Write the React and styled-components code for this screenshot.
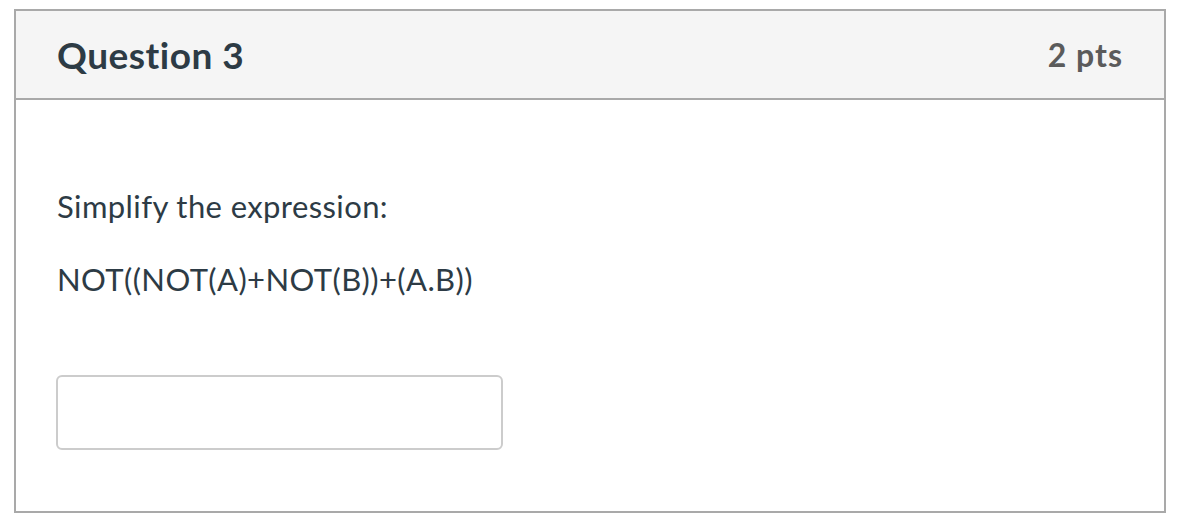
import styled, { createGlobalStyle } from "styled-components";

const GlobalStyle = createGlobalStyle`
    body {
        margin: 0;
        background: #fff;
        font-family: Lato, "Noto Sans", sans-serif;
        color: #2d3b45;
    }
`;

const App = () => {
    return (
        <>
            <GlobalStyle />
            <Pregunta>
                <Cabecera>
                    <Titulo>Question 3</Titulo>
                    <Puntos>2 pts</Puntos>
                </Cabecera>
                <Cuerpo>
                    <Texto>Simplify the expression:</Texto>
                    <Texto>NOT((NOT(A)+NOT(B))+(A.B))</Texto>
                    <Respuesta type="text" aria-label="Answer" />
                </Cuerpo>
            </Pregunta>
        </>
    );
}

const Pregunta = styled.div`
    box-sizing: border-box;
    width: 1152px;
    margin: 9px 0 0 14px;
    border: 2px solid #a9a9a9;
    background: #fff;
`;

const Cabecera = styled.div`
    display: flex;
    justify-content: space-between;
    align-items: center;
    height: 87px;
    padding: 0 41px;
    background-color: #f5f5f5;
    border-bottom: 2px solid #a9a9a9;
`;

const Titulo = styled.h2`
    margin: 0;
    font-size: 37px;
    letter-spacing: 0.5px;
    font-weight: 700;
    color: #2d3b45;
`;

const Puntos = styled.div`
    font-size: 32px;
    letter-spacing: 1px;
    font-weight: 700;
    color: #5b5b5b;
    margin-top: 0;
`;

const Cuerpo = styled.div`
    display: flex;
    flex-direction: column;
    align-items: flex-start;
    height: 411px;
    box-sizing: border-box;
    padding: 85px 41px 0 41px;
`;

const Texto = styled.p`
    margin: 0 0 31px;
    font-size: 31px;
    letter-spacing: 0.4px;
    line-height: 42px;
    color: #2d3b45;
`;

const Respuesta = styled.input`
    box-sizing: border-box;
    width: 447px;
    height: 75px;
    margin-top: 44px;
    margin-left: -1px;
    border: 2px solid #cccccc;
    border-radius: 6px;
    background: #fff;
    outline: none;
`;

export default App;
